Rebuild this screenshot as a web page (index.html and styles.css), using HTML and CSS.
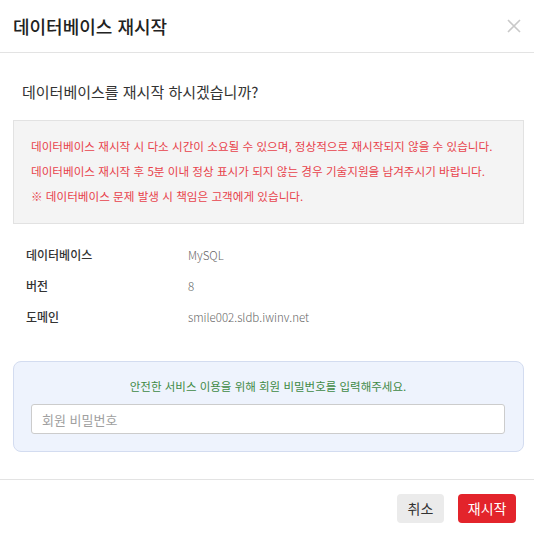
FILE: index.html
```html
<!DOCTYPE html>
<html lang="ko">
<head>
<meta charset="utf-8">
<title>데이터베이스 재시작</title>
<link rel="stylesheet" href="styles.css">
</head>
<body>
<div class="modal">
  <div class="modal-header">
    <h2 class="modal-title">데이터베이스 재시작</h2>
    <button class="close" type="button" aria-label="닫기">
      <svg width="14" height="14" viewBox="0 0 14 14"><path d="M1 1L13 13M13 1L1 13" stroke="#c9c9c9" stroke-width="1.6" fill="none"/></svg>
    </button>
  </div>
  <div class="modal-body">
    <p class="question">데이터베이스를 재시작 하시겠습니까?</p>
    <div class="notice">
      <p>데이터베이스 재시작 시 다소 시간이 소요될 수 있으며, 정상적으로 재시작되지 않을 수 있습니다.</p>
      <p>데이터베이스 재시작 후 5분 이내 정상 표시가 되지 않는 경우 기술지원을 남겨주시기 바랍니다.</p>
      <p>※ 데이터베이스 문제 발생 시 책임은 고객에게 있습니다.</p>
    </div>
    <dl class="info">
      <dt>데이터베이스</dt><dd>MySQL</dd>
      <dt>버전</dt><dd>8</dd>
      <dt>도메인</dt><dd>smile002.sldb.iwinv.net</dd>
    </dl>
    <div class="auth">
      <p class="auth-text">안전한 서비스 이용을 위해 회원 비밀번호를 입력해주세요.</p>
      <input class="auth-input" type="password" placeholder="회원 비밀번호">
    </div>
  </div>
  <div class="modal-footer">
    <button class="btn btn-cancel" type="button">취소</button>
    <button class="btn btn-danger" type="button">재시작</button>
  </div>
</div>
</body>
</html>
```

FILE: styles.css
```css
* { box-sizing: border-box; }
html, body {
  margin: 0;
  padding: 0;
  background: #fff;
}
body {
  font-family: "Noto Sans CJK KR", "Noto Sans", sans-serif;
  color: #333;
}
.modal {
  width: 534px;
  display: flex;
  flex-direction: column;
}
.modal-header {
  flex-shrink: 0;
  height: 53px;
  border-bottom: 1px solid #e3e3e3;
  display: flex;
  align-items: center;
  justify-content: space-between;
  padding: 0 13px 0 13px;
}
.modal-title {
  margin: 0;
  font-size: 18px;
  font-weight: 500;
  color: #222;
  line-height: 26px;
}
.close {
  border: 0;
  background: none;
  padding: 0;
  width: 14px;
  height: 14px;
  display: block;
  cursor: pointer;
}
.close svg { display: block; }
.modal-body {
  padding: 0 10px 0 13px;
}
.question {
  margin: 28px 0 17px 9px;
  font-size: 15px;
  line-height: 22px;
  color: #333;
}
.notice {
  background: #f4f4f4;
  border: 1px solid #e2e2e2;
  padding: 13px 17px 14px;
}
.notice p {
  margin: 0;
  font-size: 11.6px;
  line-height: 25px;
  color: #e8424b;
  white-space: nowrap;
}
.info {
  margin: 15px 0 0;
  padding-left: 13px;
  display: grid;
  grid-template-columns: 162px 1fr;
  grid-auto-rows: 31px;
  align-items: center;
  font-size: 12px;
}
.info dt {
  font-weight: 500;
  color: #333;
}
.info dd {
  margin: 0;
  color: #666;
  font-weight: 300;
  font-size: 11.5px;
}
.auth {
  margin-top: 29px;
  background: #eef3fd;
  border: 1px solid #d3dcf0;
  border-radius: 8px;
  padding: 15px 18px 17px 17px;
}
.auth-text {
  margin: 0 0 9px;
  text-align: center;
  font-size: 11.5px;
  line-height: 18px;
  color: #3f8a45;
}
.auth-input {
  display: block;
  width: 100%;
  height: 30px;
  border: 1px solid #ccc;
  border-radius: 3px;
  background: #fff;
  padding: 0 10px;
  font-family: inherit;
  font-size: 13px;
  color: #333;
}
.auth-input::placeholder { color: #a0a0a0; }
.modal-footer {
  flex-shrink: 0;
  margin-top: 27px;
  border-top: 1px solid #e3e3e3;
  display: flex;
  justify-content: flex-end;
  gap: 14px;
  padding: 14px 18px 13px;
}
.btn {
  height: 29px;
  border: 0;
  border-radius: 4px;
  font-family: inherit;
  font-size: 14px;
  line-height: 29px;
  cursor: pointer;
}
.btn-cancel {
  background: #ebebeb;
  color: #333;
  padding: 0 11px;
}
.btn-danger {
  background: #e3242b;
  color: #fff;
  padding: 0 9.5px;
}
```
